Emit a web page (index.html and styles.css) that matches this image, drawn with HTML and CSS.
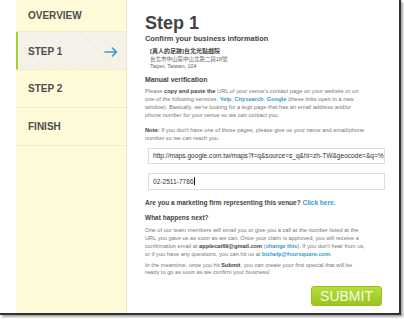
FILE: index.html
```html
<!DOCTYPE html>
<html>
<head>
<meta charset="utf-8">
<link rel="stylesheet" href="styles.css">
</head>
<body>
<div class="frame">
  <nav class="sidebar">
    <div class="nav-item first">OVERVIEW</div>
    <div class="nav-item active">STEP 1
      <svg class="arrow" width="14" height="10" viewBox="0 0 14 10"><path d="M1 5H12.5M8.5 1L12.5 5L8.5 9" fill="none" stroke="#3a9bcb" stroke-width="1.6" stroke-linecap="round" stroke-linejoin="round"/></svg>
    </div>
    <div class="nav-item">STEP 2</div>
    <div class="nav-item">FINISH</div>
  </nav>
  <main class="content">
    <h1 class="title">Step 1</h1>
    <h2 class="subtitle">Confirm your business information</h2>
    <div class="address">
      <div class="venue">[真人的足跡]台北光點戲院</div>
      <div>台北市中山區中山北路二段18號</div>
      <div>Taipei, Taiwan, 104</div>
    </div>
    <h3 class="section">Manual verification</h3>
    <p class="para">Please <b>copy and paste the</b> URL of your venue's contact page on your website or on<br>one of the following services: <a class="link">Yelp</a>, <a class="link">Citysearch</a>, <a class="link">Google</a> (these links open in a new<br>window). Basically, we're looking for a legit page that has an email address and/or<br>phone number for your venue so we can contact you.</p>
    <p class="para note"><b>Note:</b> If you don't have one of those pages, please give us your name and email/phone<br>number so we can reach you.</p>
    <div class="field url">http://maps.google.com.tw/maps?f=q&amp;source=s_q&amp;hl=zh-TW&amp;geocode=&amp;q=%</div>
    <div class="field phone">02-2511-7786<span class="caret"></span></div>
    <h3 class="section firm">Are you a marketing firm representing this venue? <a class="link">Click here.</a></h3>
    <h3 class="section next">What happens next?</h3>
    <p class="para">One of our team members will email you or give you a call at the number listed at the<br>URL you gave us as soon as we can. Once your claim is approved, you will receive a<br>confirmation email at <b>applecat69@gmail.com</b> (<a class="link">change this</a>). If you don't hear from us,<br>or if you have any questions, you can hit us at <a class="link">bizhelp@foursquare.com</a>.</p>
    <p class="para meantime">In the meantime, once you hit <b>Submit</b>, you can create your first special that will be<br>ready to go as soon as we confirm your business!</p>
    <div class="actions"><button class="submit">SUBMIT</button></div>
  </main>
</div>
</body>
</html>
```
FILE: styles.css
```css
html, body {
  margin: 0;
  padding: 0;
  background: #fff;
}
body {
  font-family: "Liberation Sans", Arial, sans-serif;
  width: 404px;
  height: 319px;
  overflow: hidden;
}
.frame {
  display: flex;
  width: 383px;
  height: 313px;
  padding-left: 16px;
  background: #fff;
  border-right: 2px solid #333;
  border-bottom: 2px solid #333;
  box-shadow: 2px 2px 2px rgba(0,0,0,0.35);
}
.sidebar {
  width: 110px;
  flex: none;
  background: #fffbd9;
  border-right: 1px solid #ece7c6;
}
.nav-item {
  position: relative;
  height: 37px;
  padding-left: 12px;
  border-bottom: 1px solid #f1ebcc;
  display: flex;
  align-items: center;
  font-size: 10px;
  font-weight: bold;
  color: #4e4e4e;
  line-height: 1;
}
.nav-item.first {
  height: 31px;
}
.nav-item.active {
  height: 35px;
  padding-top: 2px;
  border-left: 2px solid #a6cf35;
  padding-left: 10px;
  background: repeating-linear-gradient(45deg, #f7f5eb 0 1px, #f0eee2 1px 2px, #f7f5eb 2px 3px);
}
.arrow {
  position: absolute;
  right: 8px;
  top: 15px;
}
.content {
  margin-left: 18px;
  width: 240px;
  padding-top: 14px;
  color: #777;
}
.title {
  margin: 0;
  font-size: 18px;
  line-height: 18px;
  color: #444;
  font-weight: bold;
}
.subtitle {
  margin: 2px 0 0;
  font-size: 7.4px;
  line-height: 9px;
  color: #444;
  font-weight: bold;
}
.address {
  margin-top: 5px;
  padding-left: 5px;
  font-size: 5.5px;
  line-height: 7.5px;
  color: #666;
  font-family: "Liberation Sans", "Noto Sans CJK TC", sans-serif;
}
.venue {
  font-size: 6px;
  font-weight: bold;
  color: #444;
}
.section {
  margin: 4px 0 0;
  font-size: 6.9px;
  line-height: 9px;
  font-weight: bold;
  color: #444;
}
.para {
  margin: 3.5px 0 0;
  font-size: 5.7px;
  line-height: 8px;
  color: #777;
}
.para b {
  color: #444;
}
.link {
  color: #3399cc;
  font-weight: bold;
}
.note {
  margin-top: 7px;
}
.field {
  box-sizing: border-box;
  width: 237px;
  margin-left: 3px;
  border: 1px solid #ddd;
  background: #fff;
  color: #333;
  font-size: 6.6px;
  line-height: 14px;
  padding-left: 4px;
  white-space: nowrap;
  overflow: hidden;
}
.url {
  margin-top: 6px;
  height: 16px;
}
.phone {
  margin-top: 9px;
  height: 17px;
  line-height: 15px;
}
.caret {
  display: inline-block;
  width: 1px;
  height: 8px;
  background: #222;
  vertical-align: -1px;
}
.firm {
  margin-top: 9px;
  font-size: 6.5px;
  line-height: 8px;
}
.next {
  margin-top: 7px;
  font-size: 6.5px;
  line-height: 8px;
}
.meantime {
  margin-top: 4px;
  line-height: 7.5px;
}
.actions {
  display: flex;
  justify-content: flex-end;
  padding-right: 3px;
  margin-top: 9px;
}
.submit {
  width: 71px;
  height: 20px;
  border: 1px solid #97c21f;
  border-radius: 3px;
  background: linear-gradient(#b7dc3c, #98c623);
  color: #f4fbe0;
  font-family: "Liberation Sans", Arial, sans-serif;
  font-size: 14px;
  line-height: 18px;
  padding: 0;
}
```
